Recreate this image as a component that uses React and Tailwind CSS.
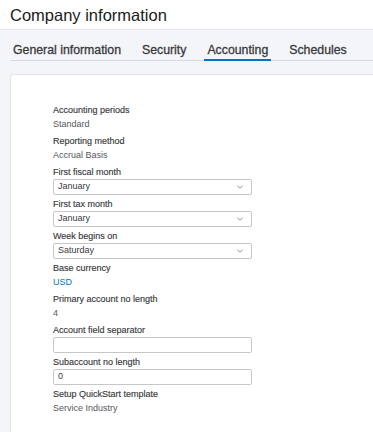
import React from "react";

const Chevron = () => (
    <svg width="6" height="4" viewBox="0 0 6 4" className="shrink-0">
        <polyline points="0.5,0.8 3,3.2 5.5,0.8" fill="none" stroke="#8d9096" strokeWidth="1" />
    </svg>
);

const Label = ({ children }) => (
    <div className="h-[14px] leading-[14px] text-[9px] text-[#393a3d] [-webkit-text-stroke:0.15px_#393a3d]">{children}</div>
);

const TextField = ({ label, value, blue }) => (
    <div className="mb-[3px]">
        <Label>{label}</Label>
        <div className={`h-[14px] leading-[14px] text-[9px] ${blue ? "text-[#0077c5]" : "text-[#55575d]"}`}>{value}</div>
    </div>
);

const SelectField = ({ label, value }) => (
    <div className="mb-[2px]">
        <Label>{label}</Label>
        <div className="w-[199px] h-[16px] flex items-center justify-between pl-[4px] pr-[8px] border border-[#c4c7cc] rounded-[2px] bg-white text-[9px] text-[#393a3d]">
            <span>{value}</span>
            <Chevron />
        </div>
    </div>
);

const InputField = ({ label, value }) => (
    <div className="mb-[2px]">
        <Label>{label}</Label>
        <div className="w-[199px] h-[16px] flex items-center pl-[4px] border border-[#c4c7cc] rounded-[2px] bg-white text-[9px] text-[#393a3d]">
            {value}
        </div>
    </div>
);

const App = () => {
    const tabs = ["General information", "Security", "Accounting", "Schedules"];

    return (
        <div className="h-[432px] w-full overflow-hidden bg-[#f4f5f8]" style={{ fontFamily: '"Liberation Sans", Arial, sans-serif' }}>
            {/* Header */}
            <header className="h-[30px] bg-white border-b border-[#e6e8eb] flex items-center pl-[10px]">
                <h1 className="text-[16.5px] leading-none text-[#1b1b1b] pt-[2px]">Company information</h1>
            </header>

            {/* Tabs */}
            <nav className="ml-[10px] mt-[13px] flex gap-[15px] border-b border-[#d6d9de]">
                {tabs.map((t) => (
                    <div
                        key={t}
                        className={`-mb-px px-[3px] pb-[1px] h-[18px] leading-[15px] text-[12.3px] text-[#393a3d] [-webkit-text-stroke:0.3px_#393a3d] border-b-2 ${
                            t === "Accounting" ? "border-[#0077c5]" : "border-transparent"
                        }`}
                    >
                        {t}
                    </div>
                ))}
            </nav>

            {/* Card */}
            <div className="ml-[10px] mt-[13px] h-[400px] bg-white border-l border-t border-[#e3e5e9] rounded-tl-[3px] pt-[28px] pl-[42px]">
                <TextField label="Accounting periods" value="Standard" />
                <TextField label="Reporting method" value="Accrual Basis" />
                <SelectField label="First fiscal month" value="January" />
                <SelectField label="First tax month" value="January" />
                <SelectField label="Week begins on" value="Saturday" />
                <TextField label="Base currency" value="USD" blue />
                <TextField label="Primary account no length" value="4" />
                <InputField label="Account field separator" value="" />
                <InputField label="Subaccount no length" value="0" />
                <TextField label="Setup QuickStart template" value="Service Industry" />
            </div>
        </div>
    );
};

export default App;
